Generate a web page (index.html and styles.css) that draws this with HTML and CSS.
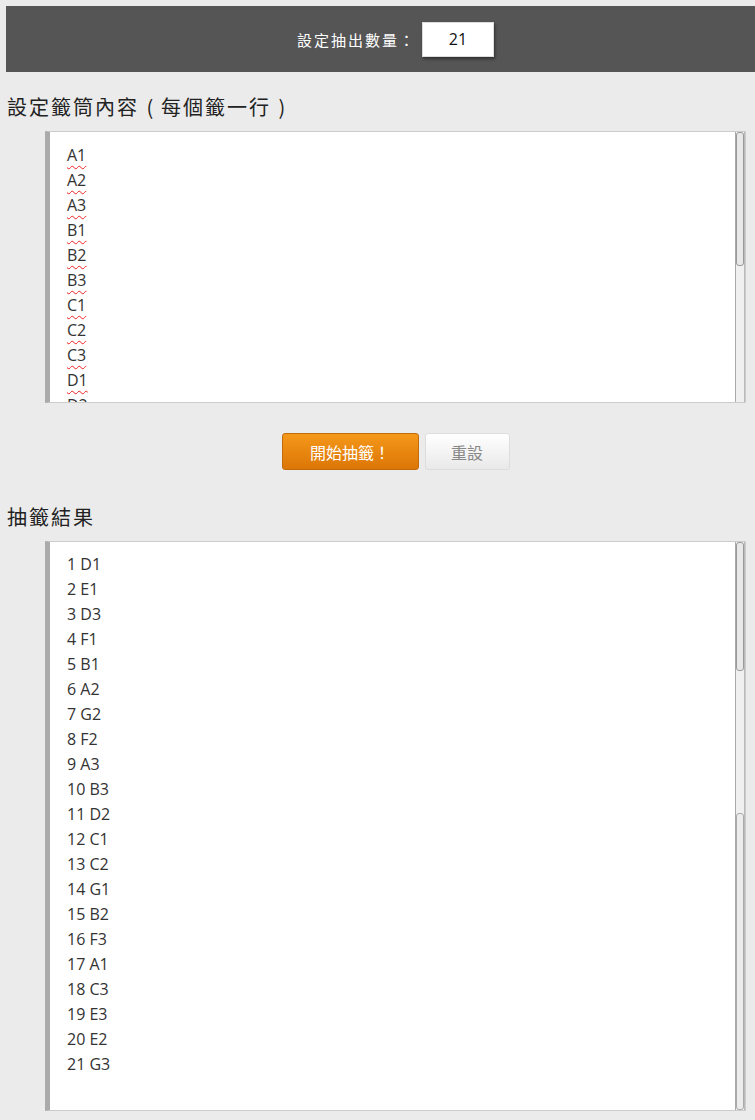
FILE: index.html
```html
<!DOCTYPE html>
<html>
<head>
  <meta charset="utf-8">
  <title>抽籤</title>
  <link rel="stylesheet" href="styles.css">
</head>
<body>

  <header class="bar">
    <label for="count">設定抽出數量：</label>
    <input type="text" id="count" value="21">
  </header>

  <h2 class="title">設定籤筒內容<span class="paren">(</span>每個籤一行<span class="paren">)</span></h2>
  <div class="wrap">
    <textarea id="pool" class="box box-pool" spellcheck="false">A1
A2
A3
B1
B2
B3
C1
C2
C3
D1
D2
D3
E1
E2
E3
F1
F2
F3
G1
G2
G3</textarea>
    <div class="scroll"><div class="thumb thumb-pool"></div></div>
  </div>

  <div class="actions">
    <button class="btn btn-go">開始抽籤！</button>
    <button class="btn btn-reset">重設</button>
  </div>

  <h2 class="title title-result">抽籤結果</h2>
  <div class="wrap">
    <textarea id="result" class="box box-result" spellcheck="false">1 D1
2 E1
3 D3
4 F1
5 B1
6 A2
7 G2
8 F2
9 A3
10 B3
11 D2
12 C1
13 C2
14 G1
15 B2
16 F3
17 A1
18 C3
19 E3
20 E2
21 G3</textarea>
    <div class="scroll">
      <div class="thumb thumb-result"></div>
      <div class="thumb thumb-rest"></div>
    </div>
  </div>

</body>
</html>
```

FILE: styles.css
```css
body {
  margin: 0;
  background: #ebebeb;
  font-family: "Open Sans", "Noto Sans CJK TC", sans-serif;
  color: #333;
}

.bar {
  margin: 6px 0 0 6px;
  height: 66px;
  background: #555;
  display: flex;
  align-items: center;
  justify-content: center;
  padding-left: 30px;
}

.bar label {
  color: #fff;
  font-family: "Noto Sans CJK TC", sans-serif;
  font-size: 15px;
  letter-spacing: 2px;
  margin-right: 6px;
}

.bar input {
  width: 72px;
  height: 35px;
  box-sizing: border-box;
  border: 1px solid #ddd;
  box-shadow: 1px 2px 3px rgba(0, 0, 0, 0.45);
  text-align: center;
  font-family: "Open Sans", sans-serif;
  font-size: 16px;
  color: #111;
  outline: none;
}

.title {
  margin: 20px 0 9px 7px;
  font-family: "Noto Sans CJK TC", sans-serif;
  font-weight: normal;
  font-size: 20px;
  line-height: 30px;
  letter-spacing: 2px;
  color: #222;
}

.paren {
  display: inline-block;
  width: 22px;
  text-align: center;
  letter-spacing: 0;
}

.title-result {
  margin-top: 32px;
}

.wrap {
  position: relative;
  margin-left: 45px;
  width: 701px;
}

.box {
  display: block;
  box-sizing: border-box;
  width: 100%;
  border: 1px solid #ccc;
  border-left: 5px solid #aaa;
  padding: 11px 16px 11px 17px;
  font-family: "Open Sans", sans-serif;
  font-size: 16px;
  line-height: 25px;
  color: #333;
  background: #fff;
  resize: none;
  outline: none;
  overflow: hidden;
}

.box-pool {
  height: 272px;
  text-decoration: underline wavy #e22;
  text-decoration-thickness: 1px;
  text-underline-offset: 4px;
}

.box-result {
  height: 570px;
  padding-top: 10px;
}

/* fake scrollbar drawn over the right edge */
.scroll {
  position: absolute;
  top: 1px;
  right: 1px;
  bottom: 1px;
  width: 10px;
  background: #f0f0f0;
  border-left: 1px solid #aaa;
  border-right: 1px solid #bbb;
  box-sizing: border-box;
}

.thumb {
  position: absolute;
  left: 0;
  right: 0;
  background: #e8e8e8;
  border: 1px solid #999;
  border-radius: 3px;
}

.thumb-pool {
  top: 0;
  height: 132px;
}

.thumb-result {
  top: 0;
  height: 127px;
}

.thumb-rest {
  top: 271px;
  bottom: 0;
  background: #ececec;
  border-color: #aaa;
}

.actions {
  display: flex;
  justify-content: center;
  gap: 6px;
  margin: 30px 0 0 45px;
  padding-right: 9px;
}

.btn {
  height: 37px;
  border-radius: 3px;
  font-family: "Noto Sans CJK TC", sans-serif;
  font-size: 16px;
  cursor: pointer;
}

.btn-go {
  width: 137px;
  color: #fff;
  border: 1px solid #c06c08;
  background: linear-gradient(#f5981a, #dc7606);
}

.btn-reset {
  width: 85px;
  color: #888;
  border: 1px solid #ddd;
  background: linear-gradient(#fff, #e9e9e9);
}
```
